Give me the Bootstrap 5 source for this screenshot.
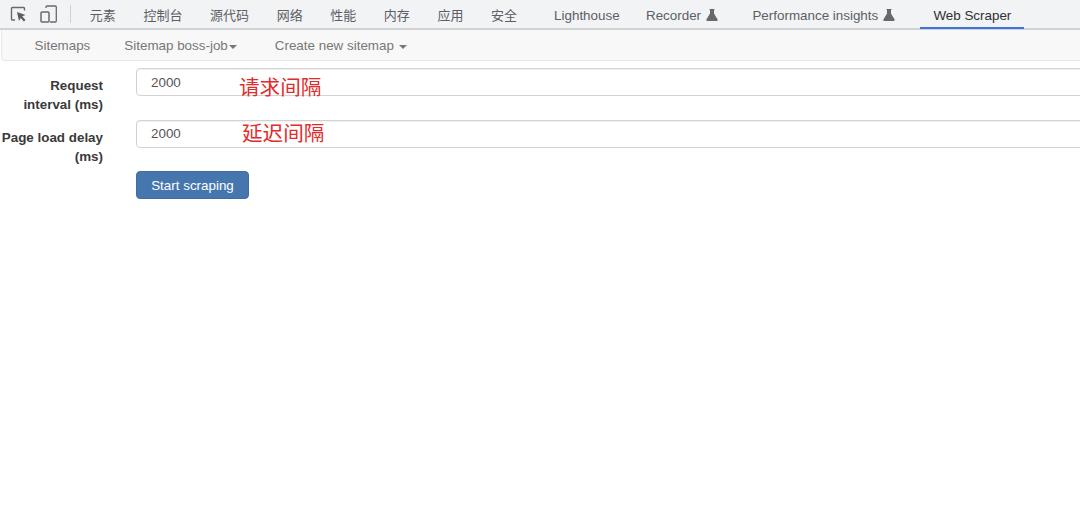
<!doctype html>
<html lang="zh">
<head>
<meta charset="utf-8">
<title>Web Scraper</title>
<link rel="stylesheet" href="https://cdn.jsdelivr.net/npm/bootstrap@5.3.0/dist/css/bootstrap.min.css">
<style>
html,body{height:100%;overflow:hidden;background:#fff}
body{font-family:"Liberation Sans","Noto Sans CJK SC",sans-serif;font-size:13.4px;color:#333;width:1080px}
.devbar{height:30px;background:#f2f3f5;border-bottom:2px solid #d0d2d6;padding-left:10px}
.devicons{width:66px;height:28px;gap:13px}
.sepline{width:1px;height:18px;background:#cfd1d4}
.devtab{height:30px;padding:5px 13.8px 0;color:#5c6066;font-size:13px;line-height:1;white-space:nowrap;border-bottom:2px solid transparent;gap:5px}
.devtab.latin{font-size:13.4px;padding-left:13.2px;padding-right:13.2px}
.devtab.cur{color:#2f3033;border-bottom-color:#3f75d9;margin-left:12px;padding-left:13px;padding-right:13px}
.gapl{margin-left:10px}
.gapm{margin-left:8px}
.flask{width:12px;height:12px;fill:#66696e;margin-top:-2px}
.scrapebar{height:31px;background:#f8f8f8;border:1px solid #e7e7e7;border-width:0 0 1px 1px;border-radius:0 0 0 4px;margin-left:1px;padding:3px 0 0 19px}
.scrapelink{color:#777;font-size:13.4px;padding:0 13.5px;white-space:nowrap;text-decoration:none}
.scrapelink.tight{padding-right:0;margin-left:7px}
.scrapelink.last{margin-left:38px;padding-left:0}
.caretmark{display:inline-block;width:0;height:0;border-top:4px solid #777;border-left:4px solid transparent;border-right:4px solid transparent;margin-left:1px;vertical-align:middle}
.caretmark.wide{margin-left:5px}
.formarea{padding-top:7px}
.formline{height:52px}
.lbl{width:103px;flex:none;text-align:right;font-weight:700;font-size:13.4px;line-height:19px;padding-top:8px;color:#3a3a3a;white-space:nowrap}
.fieldwrap{margin-left:33px;position:relative;width:960px;flex:none}
.fieldwrap .form-control{height:28px;font-size:13.4px;line-height:18px;padding:0 14px;color:#555;border:1.5px solid #d2d2d2;border-radius:4px;box-shadow:inset 0 1px 1px rgba(0,0,0,.06);width:960px}
.fieldwrap .form-control.lift{padding-bottom:2px}
.redmark{position:absolute;top:6px;color:#e22b2b;font-size:20.6px;line-height:27px;white-space:nowrap;pointer-events:none}
.startbtn{margin:-1px 0 0 136px;background:#4676ae;border:1px solid #3f6da3;color:#fff;font-size:13.4px;height:28px;width:113px;padding:2px 0 0;border-radius:4px;display:block}
</style>
</head>
<body>
<div class="devbar d-flex align-items-center">
  <div class="devicons d-flex align-items-center flex-none">
    <svg width="17" height="16" viewBox="0 0 17 16" fill="none"><path d="M5 14H2.500a1 1 0 0 1-1-1V2.500a1 1 0 0 1 1-1h11a1 1 0 0 1 1 1v2" stroke="#66696e" stroke-width="1.4"/><path d="M7 6l8.500 3-3.300 1.300L15.500 14l-1.600 1.500-3.200-3.600L9 15z" fill="#5a5d62"/></svg>
    <svg width="17" height="18" viewBox="0 0 17 18" fill="none"><path d="M6 3V2a1 1 0 0 1 1-1h8.300a1 1 0 0 1 1 1v14a1 1 0 0 1-1 1H10" stroke="#66696e" stroke-width="1.300"/><rect x="1" y="7" width="8" height="10" rx="1" stroke="#66696e" stroke-width="1.500"/></svg>
    <span class="sepline"></span>
  </div>
  <div class="d-flex align-items-center">
    <span class="devtab d-flex align-items-center">元素</span>
    <span class="devtab d-flex align-items-center">控制台</span>
    <span class="devtab d-flex align-items-center">源代码</span>
    <span class="devtab d-flex align-items-center">网络</span>
    <span class="devtab d-flex align-items-center">性能</span>
    <span class="devtab d-flex align-items-center">内存</span>
    <span class="devtab d-flex align-items-center">应用</span>
    <span class="devtab d-flex align-items-center">安全</span>
    <span class="devtab latin d-flex align-items-center gapl">Lighthouse</span>
    <span class="devtab latin d-flex align-items-center">Recorder <svg class="flask" viewBox="0 0 12 12"><path d="M3.500 0h5v1H8v3.500l3.600 6a1 1 0 0 1-.9 1.500H1.300a1 1 0 0 1-.9-1.500L4 4.500V1h-.5z"/></svg></span>
    <span class="devtab latin d-flex align-items-center gapm">Performance insights <svg class="flask" viewBox="0 0 12 12"><path d="M3.500 0h5v1H8v3.500l3.600 6a1 1 0 0 1-.9 1.500H1.300a1 1 0 0 1-.9-1.500L4 4.500V1h-.5z"/></svg></span>
    <span class="devtab latin cur d-flex align-items-center">Web Scraper</span>
  </div>
</div>
<nav class="scrapebar d-flex align-items-center">
  <a class="scrapelink" href="#">Sitemaps</a>
  <a class="scrapelink tight" href="#">Sitemap boss-job<span class="caretmark"></span></a>
  <a class="scrapelink last" href="#">Create new sitemap<span class="caretmark wide"></span></a>
</nav>
<form class="formarea" onsubmit="return false">
  <div class="formline d-flex">
    <label class="lbl">Request<br>interval (ms)</label>
    <div class="fieldwrap"><input class="form-control" value="2000"><span class="redmark" style="left:103px">请求间隔</span></div>
  </div>
  <div class="formline d-flex">
    <label class="lbl">Page load delay<br>(ms)</label>
    <div class="fieldwrap"><input class="form-control lift" value="2000"><span class="redmark" style="left:106px;top:0">延迟间隔</span></div>
  </div>
  <button class="btn startbtn" type="button">Start scraping</button>
</form>
<script src="https://cdn.jsdelivr.net/npm/bootstrap@5.3.0/dist/js/bootstrap.bundle.min.js"></script>
</body>
</html>
